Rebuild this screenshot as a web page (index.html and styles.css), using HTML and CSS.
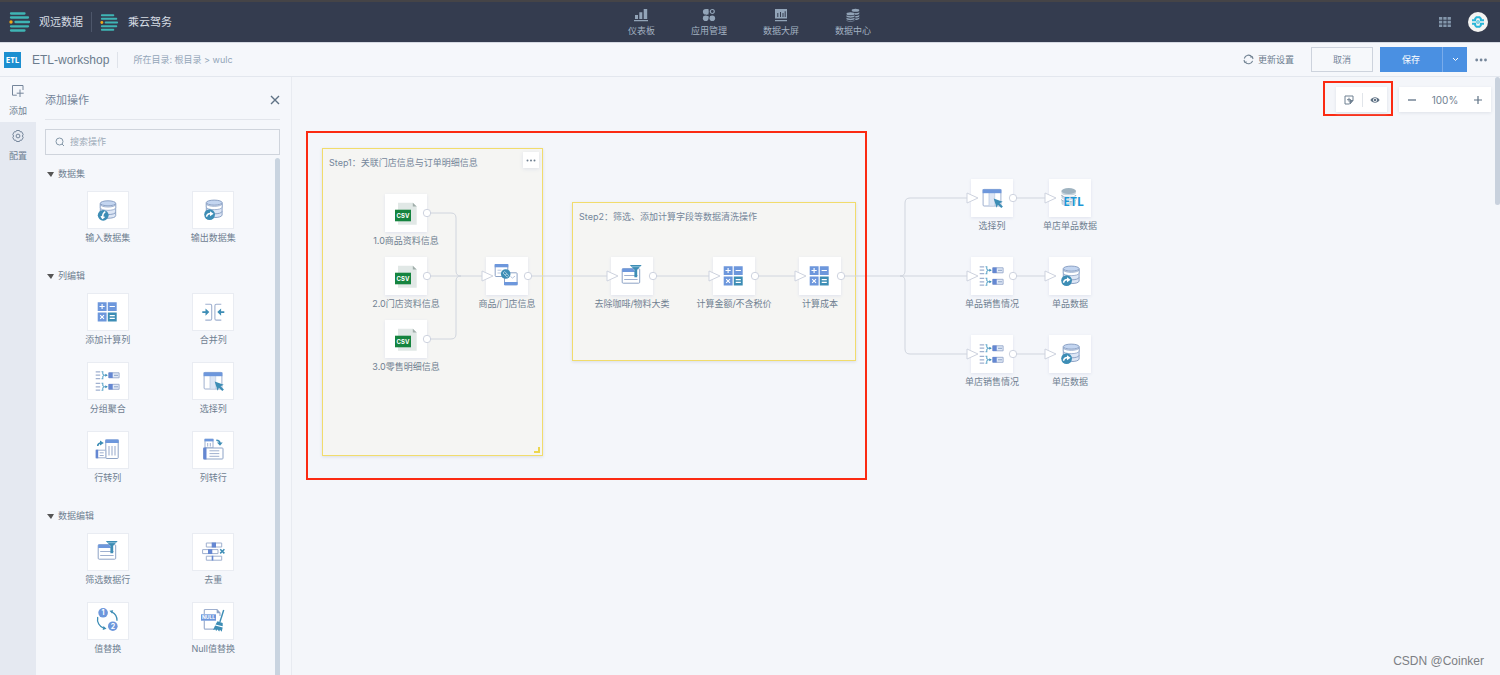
FILE: index.html
```html
<!DOCTYPE html>
<html lang="zh-CN">
<head>
<meta charset="utf-8">
<title>ETL-workshop</title>
<link rel="stylesheet" href="styles.css">
</head>
<body>
<svg class="sprite" aria-hidden="true">
  <symbol id="logo" viewBox="0 0 22 20">
    <g stroke="#3fb5b5" stroke-width="2.3" stroke-linecap="round">
      <path d="M2 1.5h13.5M2 5.5h17M6.5 10H20M2 14.3h17M2 18.5h13.5"/>
    </g>
    <circle cx="2" cy="10" r="1.7" fill="#f0a818"/>
  </symbol>
  <symbol id="db-in" viewBox="0 0 42 38">
    <path d="M13.3 12.3v12.4c0 3.4 15.4 3.4 15.4 0V12.3" fill="#dde6f5" stroke="#8da3c6"/>
    <path d="M13.3 13.3c0 3.6 15.4 3.6 15.4 0v3.5c0 3.4-15.4 3.4-15.4 0z" fill="#fff" stroke="#8da3c6" stroke-width=".8"/>
    <path d="M13.3 21c0 3.4 15.4 3.4 15.4 0" fill="none" stroke="#8da3c6"/>
    <ellipse cx="21" cy="12.3" rx="7.7" ry="2.5" fill="#c3d5f0" stroke="#8da3c6"/>
    <circle cx="16.2" cy="24.3" r="5.4" fill="#3d8db5"/>
    <path d="M18.3 20.6c-3.5 2-2.3 4-2.7 6.2M14 25.2l1.5 2 2-1.3" fill="none" stroke="#fff" stroke-width="1.4"/>
  </symbol>
  <symbol id="db-out" viewBox="0 0 42 38">
    <path d="M14.3 11.6V24c0 3.4 15.8 3.4 15.8 0V11.6" fill="#dde6f5" stroke="#8da3c6"/>
    <path d="M14.3 12.6c0 3.6 15.8 3.6 15.8 0v3.5c0 3.4-15.8 3.4-15.8 0z" fill="#fff" stroke="#8da3c6" stroke-width=".8"/>
    <path d="M14.3 20.3c0 3.4 15.8 3.4 15.8 0" fill="none" stroke="#8da3c6"/>
    <ellipse cx="22.2" cy="11.6" rx="7.9" ry="2.5" fill="#c3d5f0" stroke="#8da3c6"/>
    <circle cx="17.6" cy="23.6" r="5.4" fill="#3d8db5"/>
    <path d="M14.6 25.8c.2-2.7 1.8-3.2 4-3.2" fill="none" stroke="#fff" stroke-width="1.5"/>
    <path d="M18 20.2l3.6 2.5-3.6 2.5z" fill="#fff"/>
  </symbol>
  <symbol id="calc" viewBox="0 0 42 38">
    <path d="M10.7 9.2h8.9v8.7h-8.9zM20.8 9.2h8.9v8.7h-8.9zM10.7 19.5h8.9v9h-8.9z" fill="#6d97dc"/>
    <path d="M20.8 19.5h8.9v9h-8.9z" fill="#3d8db5"/>
    <path d="M12.5 13.5h5.2M15.1 10.9v5.2M22.6 13.5h5.3M13.2 22.1l3.8 3.8M17 22.1l-3.8 3.8M22.7 22.6h5.1M22.7 25.4h5.1" stroke="#fff" stroke-width="1.1"/>
  </symbol>
  <symbol id="merge" viewBox="0 0 42 38">
    <path d="M13.3 11.3h5c1 0 1.4.5 1.4 1.4v13c0 .9-.4 1.4-1.4 1.4h-5M29.3 11.3h-5c-1 0-1.4.5-1.4 1.4v13c0 .9.4 1.4 1.4 1.4h5" fill="none" stroke="#9fb0cf" stroke-width="1.1"/>
    <path d="M10.3 18.2h3.2v-2.7l3.8 3.6-3.8 3.6V20h-3.2zM32.3 18.2h-3.2v-2.7l-3.8 3.6 3.8 3.6V20h3.2z" fill="#3d8db5"/>
  </symbol>
  <symbol id="group" viewBox="0 0 42 38">
    <path d="M8.7 9.8h4.5M8.7 13.2h4.5M8.7 16.7h4.5M8.7 21.3h4.5M8.7 24.8h4.5M8.7 28.2h4.5" stroke="#9fb0cf" stroke-width="1.2"/>
    <path d="M14.5 9.8h1.3v2.3l1.4 1.1-1.4 1.2v2.3h-1.3M17.2 13.2h3M14.5 21.3h1.3v2.3l1.4 1.2-1.4 1.1v2.3h-1.3M17.2 24.8h3" fill="none" stroke="#62a9cc" stroke-width="1.1"/>
    <path d="M18.3 11.7l2.4 1.5-2.4 1.5zM18.3 23.3l2.4 1.5-2.4 1.5z" fill="#3d8db5"/>
    <path d="M21.8 10.8h10.3v5H21.8zM21.8 22.3h10.3v5H21.8z" fill="#e2eaf7" stroke="#9fb0cf"/>
    <path d="M21.6 10.5h4.1v5.6h-4.1zM21.6 22h4.1v5.6h-4.1z" fill="#6487d2"/>
    <path d="M27 13.3h4M27 24.8h4" stroke="#8da3c6"/>
  </symbol>
  <symbol id="select" viewBox="0 0 42 38">
    <rect x="12.1" y="10.4" width="17.8" height="16.6" rx="1" fill="#fff" stroke="#9fb0cf"/>
    <path d="M18 13.5h5.5v13H18z" fill="#dde6f5"/>
    <path d="M18 14v13M23.7 14v13" stroke="#bccbe3" stroke-width=".8"/>
    <path d="M11.6 10.3h18.8v3.9H11.6z" fill="#6d97dc"/>
    <path d="M22.7 19.5l9 3.2-3.1 1.6 3.3 3.2-1.6 1.6-3.4-3.4-1.4 3.1z" fill="#3d8db5"/>
  </symbol>
  <symbol id="row-col" viewBox="0 0 42 38">
    <rect x="18.8" y="9" width="12.4" height="18.5" rx=".8" fill="#fff" stroke="#8da3c6"/>
    <path d="M18.3 8.5h13.4V12H18.3z" fill="#6d97dc"/>
    <path d="M22 15v9.5M25 15v9.5M28 15v9.5" stroke="#9fb0cf" stroke-width="1.1"/>
    <path d="M9.3 19.2h9.5v7.6H9.3z" fill="#fff" stroke="#9fb0cf"/>
    <path d="M8.7 18.7h2.5v8.6H8.7z" fill="#6487d2"/>
    <path d="M12.7 21.8h4M12.7 24.5h4" stroke="#9fb0cf"/>
    <path d="M10.7 15c.2-2.2 1.5-3 3.3-3" fill="none" stroke="#3d8db5" stroke-width="1.6"/>
    <path d="M13 9.5l3.8 2.5-3.8 2.6z" fill="#3d8db5"/>
  </symbol>
  <symbol id="col-row" viewBox="0 0 42 38">
    <path d="M13 8.3h8v8.6h-8z" fill="#fff" stroke="#9fb0cf"/>
    <path d="M12.5 7.8h9v2.6h-9z" fill="#6d97dc"/>
    <path d="M15.7 12v3.5M18.3 12v3.5" stroke="#9fb0cf"/>
    <rect x="11.8" y="17" width="19.2" height="11" rx=".8" fill="#fff" stroke="#8da3c6"/>
    <path d="M11.3 16.6h3.2v11.8h-3.2z" fill="#6487d2"/>
    <path d="M17.5 19.8h9.8M17.5 22.6h9.8M17.5 25.3h9.8" stroke="#9fb0cf"/>
    <path d="M24.3 9.2c2.2 0 3.5.8 3.5 2.8" fill="none" stroke="#3d8db5" stroke-width="1.6"/>
    <path d="M25 11.5h5.7L28 14.8z" fill="#3d8db5"/>
  </symbol>
  <symbol id="filter" viewBox="0 0 42 38">
    <rect x="11.2" y="11.7" width="17.5" height="14.5" rx="1" fill="#fff" stroke="#8da3c6"/>
    <path d="M11.2 11.5h11l2 3.5h-13z" fill="#6d97dc"/>
    <path d="M13.2 18.5h13.4M13.2 22.5h13.4" stroke="#9fb0cf"/>
    <path d="M18.8 8h11.9l-4.5 4.8v7.4h-2.8v-7.4z" fill="#3d8db5"/>
    <path d="M20.5 9.7h8.6" stroke="#9dc9dd" stroke-width=".8"/>
  </symbol>
  <symbol id="dedup" viewBox="0 0 42 38">
    <path d="M14.3 10h15.4v4H14.3zM10.6 16.6H26v4H10.6zM14.3 23.2h15.4v4H14.3z" fill="#fff" stroke="#9fb0cf"/>
    <path d="M19.7 9.6H24v4.8h-4.3zM16 16.2h4.3V21H16zM19.7 22.8h1.6v4.8h-1.6z" fill="#6487d2"/>
    <path d="M28.2 16.2l4.2 4.2M32.4 16.2l-4.2 4.2" stroke="#3d8db5" stroke-width="1.5"/>
  </symbol>
  <symbol id="csv-file" viewBox="0 0 42 38">
    <path d="M13 8.7h14.8l3.9 3.8v18.2H13z" fill="#e1e8e6"/>
    <path d="M27.8 8.7v3.8h3.9z" fill="#a0adaa"/>
    <path d="M10 15.700h16v11.600H10z" fill="#15843f"/>
  </symbol>
  <symbol id="join" viewBox="0 0 42 38">
    <rect x="9.2" y="7.5" width="12.6" height="12" rx=".8" fill="#fff" stroke="#8da3c6"/>
    <path d="M8.7 7h13.6v3.3H8.7z" fill="#6d97dc"/>
    <path d="M11.5 13.2h4M11.5 16h4" stroke="#b7c7e0"/>
    <rect x="18.5" y="15.8" width="12.6" height="12" rx=".8" fill="#fff" stroke="#8da3c6"/>
    <path d="M18 25h13.6v3.2H18z" fill="#6d97dc"/>
    <path d="M24.5 19.5l2 1.6 2.5-2" fill="none" stroke="#b7c7e0"/>
    <circle cx="19.7" cy="17" r="4.8" fill="#3d8db5"/>
    <path d="M17 16l1.700-1.500 2.100 2.200-1.600 1.500zM19.200 18.200l1.700-1.500 1.800 2-1.600 1.500z" fill="none" stroke="#b5d7e6" stroke-width=".8"/>
  </symbol>
</svg>

<header class="topbar">
  <div class="brands">
    <svg class="logo logo-main" aria-hidden="true"><use href="#logo"/></svg>
    <span class="brand-name">观远数据</span>
    <svg class="logo logo-sub" aria-hidden="true"><use href="#logo"/></svg>
    <span class="brand-name">乘云驾务</span>
  </div>
  <nav class="mainnav">
    <a href="#"><svg viewBox="0 0 14 14"><path d="M1 7h3v4H1zM5.300 4.300h3V11h-3zM9.700 1h3.500v10H9.700zM0 12h14v1.300H0z"/></svg>仪表板</a>
    <a href="#"><svg viewBox="0 0 14 14"><circle cx="3.700" cy="3.700" r="2.800"/><circle cx="3.700" cy="10.300" r="2.800"/><circle cx="10.300" cy="10.300" r="2.800"/><path d="M4 1h2.500v5.500H4zM1 8h5.500v2H4zM8 8h2.500v2H8z"/><circle cx="10.300" cy="3.500" r="2" fill="none" stroke="#92a4b8" stroke-width="1.200"/></svg>应用管理</a>
    <a href="#"><svg viewBox="0 0 14 14"><path fill-rule="evenodd" d="M1 1h12v9.500H1zM3.300 5v4h1V5zM6 4v5h1V4zm2.500 1v4h1V5zM10.700 3.300V9h1V3.300zM1 12h12v1.200H1z"/></svg>数据大屏</a>
    <a href="#"><svg viewBox="0 0 14 14"><ellipse cx="9.500" cy="2.300" rx="3.800" ry="1.500"/><path d="M8.300 5c2 .4 5 0 5-1.300v1.600c0 1.200-3 1.700-4.500 1.500zM9.300 8c1.800 0 4-.5 4-1.500V8c0 1-2 1.600-4 1.600zM9.300 10.600c1.800 0 4-.5 4-1.300v1.200c0 .9-2 1.500-4 1.500z"/><ellipse cx="4.500" cy="5.700" rx="4" ry="1.500"/><path d="M.5 7c0 1.500 8 1.500 8 0v1.500c0 1.500-8 1.500-8 0zM.5 9.500c0 1.500 8 1.500 8 0V11c0 1.500-8 1.500-8 0zM.5 11.900c0 1.300 8 1.300 8 0v.5c0 1.500-8 1.500-8 0z"/></svg>数据中心</a>
  </nav>
  <div class="account">
    <button type="button" class="bare" aria-label="应用列表"><svg width="14" height="12" viewBox="0 0 14 12" fill="#8396ab"><path d="M1 1h3.300v2.700H1zM5.300 1h3.300v2.700H5.300zM9.600 1h3.300v2.700H9.600zM1 4.700h3.300v2.700H1zM5.300 4.700h3.300v2.700H5.300zM9.600 4.700h3.300v2.700H9.600zM1 8.400h3.300v2.700H1zM5.300 8.400h3.300v2.700H5.300zM9.600 8.400h3.300v2.700H9.600z"/></svg></button>
    <button type="button" class="bare" aria-label="账户"><svg width="20" height="20" viewBox="0 0 20 20"><circle cx="10" cy="10" r="10" fill="#f4f4f2"/><g fill="none" stroke="#27b5d8" stroke-width="2"><path d="M4 8.200h3.200V6.600l1.300-1.300h3l1.300 1.300v1.600H16M4 11.800h3.200v1.600l1.300 1.300h3l1.300-1.300v-1.600H16"/></g><circle cx="10" cy="10" r="1.300" fill="none" stroke="#27b5d8" stroke-width=".9"/></svg></button>
  </div>
</header>

<div class="toolbar">
  <span class="etl-badge">ETL</span>
  <h1>ETL-workshop</h1>
  <span class="crumb">所在目录: 根目录 &gt; wulc</span>
  <button type="button" class="bare refresh"><svg width="11" height="11" viewBox="0 0 11 11" fill="none" stroke="#6f8091" stroke-width="1.100"><path d="M9.600 6.800A4.300 4.300 0 0 1 2 8M1.300 4.500A4.300 4.300 0 0 1 9 3"/><path d="M1 6l.6 2.200L3.800 8M10 5l-.6-2.200L7.200 3"/></svg>更新设置</button>
  <button type="button" class="btn">取消</button>
  <div class="split">
    <button type="button">保存</button>
    <button type="button" class="caret" aria-label="更多保存选项"><svg width="7" height="5" viewBox="0 0 7 5" fill="none" stroke="#fff"><path d="M1 1l2.500 2.500L6 1"/></svg></button>
  </div>
  <button type="button" class="bare more" aria-label="更多"><svg width="12" height="4" viewBox="0 0 12 4" fill="#75869a"><circle cx="1.700" cy="2" r="1.400"/><circle cx="6.100" cy="2" r="1.400"/><circle cx="10.500" cy="2" r="1.400"/></svg></button>
</div>

<main class="workspace">
  <div class="rail">
    <button type="button" class="active"><svg width="14" height="14" viewBox="0 0 14 14"><path d="M12 6V1.500H1.500v9.700h4.300M9 5.500v7.500M5.700 9.200h7"/></svg>添加</button>
    <button type="button"><svg width="14" height="14" viewBox="0 0 14 14"><path d="M5.500 1.500h3l.6 1.300 1.500-.1 1.600 2.700-.8 1.600.8 1.600-1.600 2.700-1.500-.1-.6 1.300h-3l-.6-1.300-1.500.1-1.600-2.700L2.600 7l-.8-1.600 1.600-2.700 1.500.1z"/><circle cx="7" cy="7" r="1.900"/></svg>配置</button>
  </div>

  <aside class="panel">
    <div class="panel-head">
      <h2>添加操作</h2>
      <button type="button" class="bare" aria-label="关闭"><svg width="10" height="10" viewBox="0 0 10 10" stroke="#5f7285" stroke-width="1.400"><path d="M1 1l8 8M9 1L1 9"/></svg></button>
    </div>
    <label class="search">
      <svg width="10" height="10" viewBox="0 0 10 10" fill="none" stroke="#8497a8"><circle cx="4.500" cy="4.500" r="3.500"/><path d="M7 7l2 2"/></svg>
      <input type="text" placeholder="搜索操作" aria-label="搜索操作">
    </label>
    <div class="scroller">
      <div class="groups">
        <section>
          <h3>数据集</h3>
          <div class="ops">
            <div class="op"><svg class="tile"><use href="#db-in"/></svg><span>输入数据集</span></div>
            <div class="op"><svg class="tile"><use href="#db-out"/></svg><span>输出数据集</span></div>
          </div>
        </section>
        <section>
          <h3>列编辑</h3>
          <div class="ops">
            <div class="op"><svg class="tile"><use href="#calc"/></svg><span>添加计算列</span></div>
            <div class="op"><svg class="tile"><use href="#merge"/></svg><span>合并列</span></div>
            <div class="op"><svg class="tile"><use href="#group"/></svg><span>分组聚合</span></div>
            <div class="op"><svg class="tile"><use href="#select"/></svg><span>选择列</span></div>
            <div class="op"><svg class="tile"><use href="#row-col"/></svg><span>行转列</span></div>
            <div class="op"><svg class="tile"><use href="#col-row"/></svg><span>列转行</span></div>
          </div>
        </section>
        <section>
          <h3>数据编辑</h3>
          <div class="ops">
            <div class="op"><svg class="tile"><use href="#filter"/></svg><span>筛选数据行</span></div>
            <div class="op"><svg class="tile"><use href="#dedup"/></svg><span>去重</span></div>
            <div class="op">
              <svg class="tile" viewBox="0 0 42 38">
                <circle cx="16.100" cy="10.800" r="4.800" fill="#6d97dc"/>
                <circle cx="25.800" cy="24.200" r="4.800" fill="#6d97dc"/>
                <text class="glyph-num" x="16" y="13.400">1</text>
                <text class="glyph-num" x="26" y="26.800">2</text>
                <path d="M10.700 15c-1 5 1.600 10 6.500 11.400M30 18.700c0-4-1.800-7-5-8.500" fill="none" stroke="#3d8db5" stroke-width="1.300"/>
                <path d="M16.500 24l3 2.800-3.800 1.200zM26.200 8.300l-3.800.5 2.600 2.800z" fill="#3d8db5"/>
              </svg>
              <span>值替换</span>
            </div>
            <div class="op">
              <svg class="tile" viewBox="0 0 42 38">
                <path d="M12.300 18.500v7.700c0 .6.300.9.900.9h9M12.300 12V8.500c0-.6.400-1 1-1H25l3 3.500v3" fill="none" stroke="#9fb0cf" stroke-width="1.200"/>
                <path d="M24.700 7.300v3.900h3.700z" fill="#8da3c6"/>
                <path d="M9 12.300h15v6.400H9z" fill="#6d97dc"/>
                <text class="glyph-null" x="16.500" y="17.300">NULL</text>
                <path d="M31.700 8l-3.800 12" stroke="#3d8db5" stroke-width="1.400"/>
                <path d="M25.500 19.300l5.200 1.600v3.300l-7.200-1.700zM23.100 23.500l7.600 1.900-1 4.400-1.700-2-.8 1.600-1.700-1.800-1.400 1.400-.7-1.600-2.300.6z" fill="#3d8db5"/>
              </svg>
              <span>Null值替换</span>
            </div>
          </div>
        </section>
      </div>
      <span class="scrollbar"></span>
    </div>
  </aside>

  <div class="canvas">
    <div class="step step-1"><p>Step1：关联门店信息与订单明细信息</p><button type="button" class="step-more" aria-label="更多"><svg width="10" height="3" viewBox="0 0 10 3" fill="#6f8091"><circle cx="1.500" cy="1.500" r="1"/><circle cx="5" cy="1.500" r="1"/><circle cx="8.500" cy="1.500" r="1"/></svg></button><span class="grip"></span></div>
    <div class="step step-2"><p>Step2：筛选、添加计算字段等数据清洗操作</p></div>

    <svg class="edges" aria-hidden="true">
      <path d="M135 136h24q5 0 5 5v53q0 5 5 5M135 262h24q5 0 5-5v-53q0-5 5-5M135 199h58M236 199h82M361 199h58M463 199h42M549 199h129M608 199q5 0 5-5v-68q0-5 5-5h60M608 199q5 0 5 5v68q0 5 5 5h60M721 121h35M721 199h35M721 277h35"/>
    </svg>

    <div class="node n-csv1"><svg class="tile" viewBox="0 0 42 38"><use href="#csv-file"/><text class="glyph-csv" x="18" y="24">CSV</text></svg><span>1.0商品资料信息</span></div>
    <div class="node n-csv2"><svg class="tile" viewBox="0 0 42 38"><use href="#csv-file"/><text class="glyph-csv" x="18" y="24">CSV</text></svg><span>2.0门店资料信息</span></div>
    <div class="node n-csv3"><svg class="tile" viewBox="0 0 42 38"><use href="#csv-file"/><text class="glyph-csv" x="18" y="24">CSV</text></svg><span>3.0零售明细信息</span></div>
    <div class="node n-join"><svg class="tile"><use href="#join"/></svg><span>商品/门店信息</span></div>
    <div class="node n-filter"><svg class="tile"><use href="#filter"/></svg><span>去除咖啡/物料大类</span></div>
    <div class="node n-amount"><svg class="tile"><use href="#calc"/></svg><span>计算金额/不含税价</span></div>
    <div class="node n-cost"><svg class="tile"><use href="#calc"/></svg><span>计算成本</span></div>
    <div class="node n-select"><svg class="tile"><use href="#select"/></svg><span>选择列</span></div>
    <div class="node n-item"><svg class="tile"><use href="#group"/></svg><span>单品销售情况</span></div>
    <div class="node n-shop"><svg class="tile"><use href="#group"/></svg><span>单店销售情况</span></div>
    <div class="node n-etl">
      <svg class="tile" viewBox="0 0 42 38">
        <path d="M12.500 12v12.500c0 1.500 3 2.300 7.300 2.300s7.200-.8 7.200-2.300V12z" fill="#c9d5dd"/>
        <path d="M12.500 14.500c0 3.200 14.500 3.200 14.500 0M12.500 19c0 3.200 14.500 3.200 14.500 0" fill="none" stroke="#fff" stroke-width="1.100"/>
        <path d="M12.500 16c0 3 14.500 3 14.500 0M12.500 20.500c0 3 14.500 3 14.500 0" fill="none" stroke="#9fb3c0"/>
        <ellipse cx="19.700" cy="12" rx="7.300" ry="2.900" fill="#9fb3c0"/>
        <text class="glyph-etl" x="24.500" y="27">ETL</text>
      </svg>
      <span>单店单品数据</span>
    </div>
    <div class="node n-item-data"><svg class="tile"><use href="#db-out"/></svg><span>单品数据</span></div>
    <div class="node n-shop-data"><svg class="tile"><use href="#db-out"/></svg><span>单店数据</span></div>

    <svg class="ports" aria-hidden="true">
      <g><circle cx="135" cy="136" r="3.700"/><circle cx="135" cy="199" r="3.700"/><circle cx="135" cy="262" r="3.700"/><circle cx="236" cy="199" r="3.700"/><circle cx="361" cy="199" r="3.700"/><circle cx="463" cy="199" r="3.700"/><circle cx="549" cy="199" r="3.700"/><circle cx="721" cy="121" r="3.700"/><circle cx="721" cy="199" r="3.700"/><circle cx="721" cy="277" r="3.700"/></g>
      <path d="M190 194l11 5-11 5zM315 194l11 5-11 5zM417 194l11 5-11 5zM503 194l11 5-11 5zM675 116l11 5-11 5zM675 194l11 5-11 5zM675 272l11 5-11 5zM753 116l11 5-11 5zM753 194l11 5-11 5zM753 272l11 5-11 5z"/>
    </svg>

    <div class="mark mark-steps"></div>

    <div class="controls">
      <div class="marked">
        <div class="card">
          <button type="button" class="bare" aria-label="添加注释"><svg width="10" height="10" viewBox="0 0 10 10" fill="none" stroke="#6f8091"><path d="M5.500 9H1V1h8v4.500M3 4.700h4M5 2.700v4"/><path d="M9 5.500H6V9z" fill="#6f8091"/></svg></button>
          <button type="button" class="bare" aria-label="预览"><svg width="10" height="8" viewBox="0 0 10 8"><path d="M.4 4C2.500.3 7.500.3 9.600 4 7.500 7.700 2.500 7.700.4 4z" fill="#5f7285"/><circle cx="5" cy="4" r="2" fill="#fff"/><circle cx="5" cy="4" r="1.200" fill="#5f7285"/></svg></button>
        </div>
      </div>
      <div class="card zoom">
        <button type="button" class="bare" aria-label="缩小"><svg width="8" height="8" viewBox="0 0 8 8"><path d="M0 4h8" stroke="#5f7285" stroke-width="1.300"/></svg></button>
        <span>100%</span>
        <button type="button" class="bare" aria-label="放大"><svg width="8" height="8" viewBox="0 0 8 8"><path d="M0 4h8M4 0v8" stroke="#5f7285" stroke-width="1.200"/></svg></button>
      </div>
    </div>
    <span class="canvas-scroll"></span>
    <span class="watermark">CSDN @Coinker</span>
  </div>
</main>
</body>
</html>
```
FILE: styles.css
```css
* { box-sizing: border-box; }

body {
  margin: 0;
  height: 100vh;
  display: flex;
  flex-direction: column;
  overflow: hidden;
  background: #f5f7fb;
  color: #74859a;
  font: 9px/16px Inter, "Noto Sans CJK SC", sans-serif;
}

h1, h2, h3, p { margin: 0; font-weight: 400; }
a { color: inherit; text-decoration: none; }
svg { display: block; flex: none; }
button { font: inherit; color: inherit; padding: 0; border: 0; cursor: pointer; }
.bare { background: none; display: flex; align-items: center; }
.sprite { position: absolute; width: 0; height: 0; }

.tile text { text-anchor: middle; fill: #fff; }
.glyph-num { font: bold 7px Inter, sans-serif; }
.glyph-null { font: bold 5px Inter, sans-serif; }
.glyph-csv { font: bold 6px Inter, sans-serif; }
.tile .glyph-etl {
  font: bold 12px "Liberation Sans Narrow", "Open Sans", sans-serif;
  fill: #1f97d5;
  stroke: #fff;
  stroke-width: 1px;
  paint-order: stroke;
}

/* Top bar */
.topbar {
  flex: none;
  height: 43px;
  display: grid;
  grid-template-columns: 1fr auto 1fr;
  align-items: center;
  padding: 0 12px 0 9px;
  background: #343c4f;
  border-top: 2px solid #454447;
  border-bottom: 1px solid #d5d9e2;
}
.brands { display: flex; align-items: center; }
.logo-main { width: 22px; height: 20px; }
.logo-sub { width: 19px; height: 17px; margin-left: 8px; }
.brand-name { font-size: 11px; color: #d6dce4; margin-left: 8px; }
.logo-main + .brand-name { padding-right: 8px; border-right: 1px solid #4d566a; line-height: 20px; }
.logo-sub + .brand-name { margin-left: 9px; }
.mainnav { display: flex; gap: 36px; padding: 2px 0 0 2px; color: #a3b2c2; }
.mainnav a { display: flex; flex-direction: column; align-items: center; gap: 1px; }
.mainnav svg { width: 14px; height: 14px; fill: #92a4b8; }
.account { display: flex; justify-content: flex-end; align-items: center; gap: 16px; }

/* Document toolbar */
.toolbar {
  flex: none;
  height: 34px;
  display: flex;
  align-items: center;
  padding: 0 13px 0 4px;
  border-bottom: 1px solid #e3e7ee;
}
.etl-badge {
  width: 17px;
  background: #1c8fd0;
  color: #fff;
  font: bold 8px/16px "Liberation Sans Narrow", "Open Sans", sans-serif;
  text-align: center;
}
.toolbar h1 {
  margin-left: 11px;
  padding-right: 8px;
  border-right: 1px solid #dfe3ea;
  font: 12px/16px "Liberation Sans", Arial, sans-serif;
  color: #6b7c8d;
}
.crumb { margin-left: 15px; color: #93a5b8; }
.refresh { gap: 4px; margin-left: auto; color: #6b7c8d; }
.btn {
  width: 62px;
  height: 25px;
  margin: 0 7px 0 17px;
  border: 1px solid #cdd3dd;
  background: #f6f8fb;
}
.split { display: flex; height: 25px; background: #4a90e2; color: #fff; }
.split button { width: 62px; background: none; }
.split .caret {
  width: 25px;
  border-left: 1px solid #79aceb;
  display: flex;
  align-items: center;
  justify-content: center;
}
.more { margin-left: 8px; }

/* Workspace */
.workspace { flex: 1; min-height: 0; display: flex; }
.rail { flex: none; width: 36px; background: #e5e9f1; }
.rail button {
  width: 100%;
  height: 45px;
  display: flex;
  flex-direction: column;
  align-items: center;
  justify-content: center;
  gap: 5px;
  padding-top: 4px;
  background: none;
  color: #6f8091;
}
.rail .active { background: #f5f7fb; }
.rail svg { fill: none; stroke: #74859a; }

.panel {
  flex: none;
  width: 256px;
  display: flex;
  flex-direction: column;
  padding: 0 11px 0 9px;
  border-right: 1px solid #e8ebf1;
}
.panel-head {
  flex: none;
  height: 43px;
  display: flex;
  align-items: center;
  justify-content: space-between;
  padding-top: 3px;
  border-bottom: 1px solid #e2e5eb;
}
.panel-head h2 { font-size: 11px; }
.search {
  flex: none;
  height: 26px;
  margin: 9px 0 3px;
  display: flex;
  align-items: center;
  gap: 5px;
  padding: 0 9px;
  border: 1px solid #cfd4dc;
}
.search input {
  flex: 1;
  min-width: 0;
  padding: 0;
  border: 0;
  outline: 0;
  background: none;
  font: inherit;
  color: inherit;
}
.search input::placeholder { color: #9dabb9; }
.scroller { flex: 1; min-height: 0; display: flex; overflow: hidden; }
.scrollbar { flex: none; width: 5px; border-radius: 3px 3px 0 0; background: #c9d4e0; }
.groups { flex: 1; padding-top: 8px; }
.groups section { margin-bottom: 22px; }
.groups h3 {
  display: flex;
  align-items: center;
  gap: 4px;
  padding-left: 2px;
  margin-bottom: 9px;
  font-size: 9px;
  color: #6f8091;
}
.groups h3::before {
  content: "";
  border: solid transparent;
  border-width: 5px 3px 0 4px;
  border-top-color: #555;
}
.ops { display: grid; grid-template-columns: 1fr 1fr; gap: 14px 0; padding: 0 9px 0 10px; }
.op { display: flex; flex-direction: column; align-items: center; gap: 1px; color: #6f8091; }
.tile { width: 42px; height: 38px; background: #fff; }
.op .tile { outline: 1px solid #e9ecf2; outline-offset: -1px; }

/* Flow canvas */
.canvas { flex: 1; position: relative; overflow: hidden; background: #f4f6fa; }
.step {
  position: absolute;
  padding: 6px;
  background: #f5f5f3;
  border: 1px solid #f1dc6c;
  box-shadow: 0 1px 3px #d9dde6;
}
.step-1 { left: 30px; top: 71px; width: 221px; height: 308px; }
.step-2 { left: 280px; top: 125px; width: 284px; height: 159px; }
.step-more {
  position: absolute;
  right: 3px;
  top: 3px;
  width: 16px;
  height: 16px;
  display: flex;
  align-items: center;
  justify-content: center;
  background: #fff;
  box-shadow: 0 1px 4px #dde1e8;
}
.grip {
  position: absolute;
  right: 2px;
  bottom: 2px;
  width: 6px;
  height: 6px;
  border: solid #ecd64e;
  border-width: 0 2px 2px 0;
}
.edges, .ports { position: absolute; left: 0; top: 0; width: 100%; height: 100%; }
.edges path { fill: none; stroke: #d0d5de; }
.ports circle, .ports path { fill: #fff; stroke: #ced3df; }
.node {
  position: absolute;
  width: 120px;
  margin-left: -60px;
  display: flex;
  flex-direction: column;
  align-items: center;
  gap: 1px;
  color: #6f8091;
}
.node .tile { box-shadow: 0 1px 3px #dfe3ee; }
.n-csv1 { left: 114px; top: 117px; }
.n-csv2 { left: 114px; top: 180px; }
.n-csv3 { left: 114px; top: 243px; }
.n-join { left: 215px; top: 180px; }
.n-filter { left: 340px; top: 180px; }
.n-amount { left: 442px; top: 180px; }
.n-cost { left: 528px; top: 180px; }
.n-select { left: 700px; top: 102px; }
.n-item { left: 700px; top: 180px; }
.n-shop { left: 700px; top: 258px; }
.n-etl { left: 778px; top: 102px; }
.n-item-data { left: 778px; top: 180px; }
.n-shop-data { left: 778px; top: 258px; }

.mark { position: absolute; border: 2px solid #fb2a12; }
.mark-steps { left: 14px; top: 54px; width: 561px; height: 349px; }

.controls { position: absolute; top: 4px; right: 9px; display: flex; align-items: flex-start; gap: 6px; }
.marked { border: 2px solid #fb2a12; padding: 4px 4px 2px 11px; }
.card { display: flex; align-items: center; height: 25px; background: #fff; box-shadow: 0 1px 3px #dde1e8; }
.marked .bare { justify-content: center; width: 26px; height: 14px; }
.marked .bare + .bare { width: 25px; border-left: 1px solid #e1e5ea; }
.zoom { width: 92px; margin-top: 6px; padding: 0 9px; justify-content: space-between; font-size: 10px; color: #6f8091; }
.canvas-scroll { position: absolute; right: 0; top: 0; width: 5px; height: 128px; border-radius: 3px; background: #c8d1dd; }
.watermark { position: absolute; right: 16px; bottom: 6px; font: 12px/16px "Liberation Sans", Arial, sans-serif; color: #7c7f84; }
```
